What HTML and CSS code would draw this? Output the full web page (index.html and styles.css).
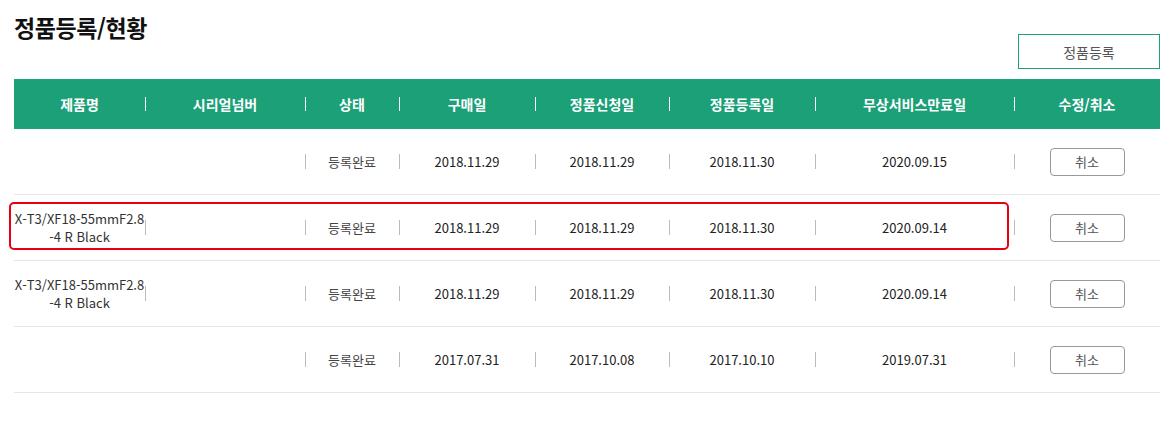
FILE: index.html
```html
<!DOCTYPE html>
<html lang="ko">
<head>
    <meta charset="UTF-8">
    <meta name="viewport" content="width=device-width, initial-scale=1.0">
    <title>정품등록/현황</title>
    <link rel="stylesheet" href="styles.css">
</head>
<body>
    <div class="page">
        <div class="page-head">
            <h1 class="title">정품등록/현황</h1>
            <button class="reg-btn">정품등록</button>
        </div>

        <div class="table-wrap">
            <table class="reg-table">
                <colgroup>
                    <col style="width:131px">
                    <col style="width:160px">
                    <col style="width:94px">
                    <col style="width:136px">
                    <col style="width:134px">
                    <col style="width:146px">
                    <col style="width:199px">
                    <col style="width:146px">
                </colgroup>
                <thead>
                    <tr>
                        <th>제품명</th>
                        <th class="sep">시리얼넘버</th>
                        <th class="sep">상태</th>
                        <th class="sep">구매일</th>
                        <th class="sep">정품신청일</th>
                        <th class="sep">정품등록일</th>
                        <th class="sep">무상서비스만료일</th>
                        <th class="sep">수정/취소</th>
                    </tr>
                </thead>
                <tbody>
                    <tr>
                        <td class="name"></td>
                        <td></td>
                        <td class="sep status">등록완료</td>
                        <td class="sep">2018.11.29</td>
                        <td class="sep">2018.11.29</td>
                        <td class="sep">2018.11.30</td>
                        <td class="sep">2020.09.15</td>
                        <td class="sep"><button class="cancel-btn">취소</button></td>
                    </tr>
                    <tr>
                        <td class="name">X-T3/XF18-55mmF2.8<br>-4 R Black</td>
                        <td class="sep"></td>
                        <td class="sep status">등록완료</td>
                        <td class="sep">2018.11.29</td>
                        <td class="sep">2018.11.29</td>
                        <td class="sep">2018.11.30</td>
                        <td class="sep">2020.09.14</td>
                        <td class="sep"><button class="cancel-btn">취소</button></td>
                    </tr>
                    <tr>
                        <td class="name">X-T3/XF18-55mmF2.8<br>-4 R Black</td>
                        <td class="sep"></td>
                        <td class="sep status">등록완료</td>
                        <td class="sep">2018.11.29</td>
                        <td class="sep">2018.11.29</td>
                        <td class="sep">2018.11.30</td>
                        <td class="sep">2020.09.14</td>
                        <td class="sep"><button class="cancel-btn">취소</button></td>
                    </tr>
                    <tr>
                        <td class="name"></td>
                        <td></td>
                        <td class="sep status">등록완료</td>
                        <td class="sep">2017.07.31</td>
                        <td class="sep">2017.10.08</td>
                        <td class="sep">2017.10.10</td>
                        <td class="sep">2019.07.31</td>
                        <td class="sep"><button class="cancel-btn">취소</button></td>
                    </tr>
                </tbody>
            </table>

            <!-- highlight around the second row -->
            <div class="highlight"></div>
        </div>
    </div>
</body>
</html>
```

FILE: styles.css
```css
* {
    margin: 0;
    padding: 0;
    box-sizing: border-box;
}

body {
    background: #ffffff;
    color: #333333;
    font-family: "Noto Sans CJK KR", "Noto Sans", sans-serif;
}

.page {
    width: 1160px;
    padding-left: 14px;
}

.page-head {
    display: flex;
    justify-content: space-between;
    align-items: flex-start;
    height: 69px;
}

.title {
    font-size: 23px;
    font-weight: bold;
    color: #111111;
    line-height: 34px;
    padding-top: 10px;
    letter-spacing: -0.4px;
}

.reg-btn {
    align-self: flex-end;
    width: 142px;
    height: 35px;
    background: #ffffff;
    border: 1px solid #1ba078;
    color: #555555;
    font-family: inherit;
    font-size: 14px;
}

.table-wrap {
    position: relative;
    margin-top: 10px;
}

.reg-table {
    width: 1146px;
    border-collapse: separate;
    border-spacing: 0;
    table-layout: fixed;
    text-align: center;
}

.reg-table th {
    height: 50px;
    background: #1ba078;
    color: #ffffff;
    font-size: 14px;
    font-weight: bold;
    position: relative;
}

.reg-table td {
    height: 66px;
    border-bottom: 1px solid #e6e6e6;
    font-size: 13px;
    color: #222222;
    position: relative;
    line-height: 18px;
}

.reg-table td.status {
    color: #444444;
}

.reg-table .sep::before {
    content: "";
    position: absolute;
    left: 0;
    top: 50%;
    width: 1px;
    height: 15px;
    margin-top: -8px;
    background: #bbbbbb;
}

.reg-table th.sep::before {
    background: #ffffff;
    height: 14px;
    margin-top: -7px;
}

.reg-table td.name {
    color: #333333;
}

.cancel-btn {
    width: 75px;
    height: 28px;
    background: #ffffff;
    border: 1px solid #999999;
    border-radius: 4px;
    color: #555555;
    font-family: inherit;
    font-size: 13px;
}

.highlight {
    position: absolute;
    left: -5px;
    top: 123px;
    width: 1000px;
    height: 48px;
    border: 2px solid #e60012;
    border-radius: 5px;
}
```
